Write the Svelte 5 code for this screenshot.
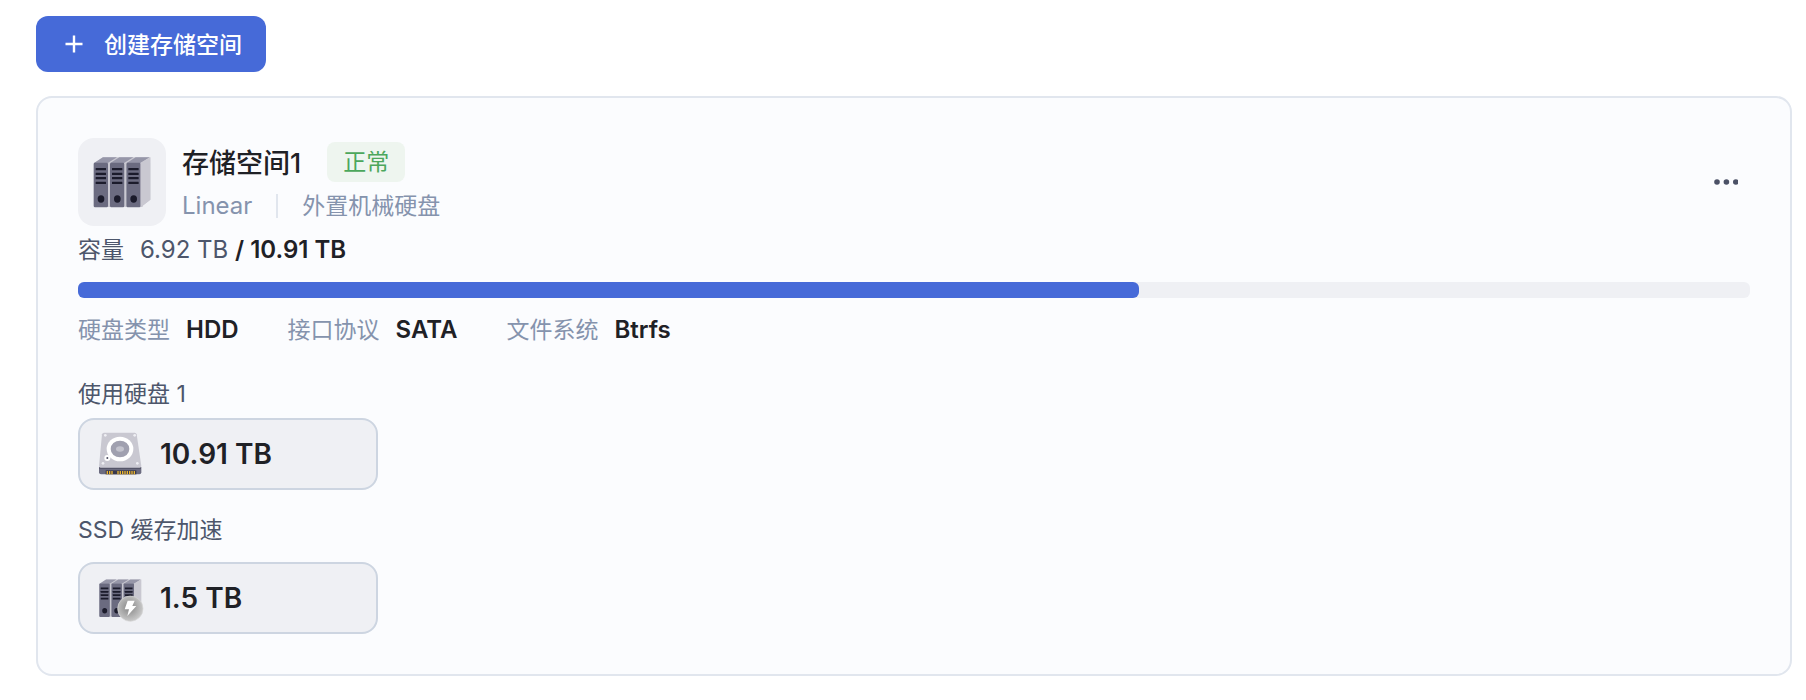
<script>
  const used = 6.92;
  const total = 10.91;
  const percent = (used / total) * 100;

  const specs = [
    { label: '硬盘类型', value: 'HDD' },
    { label: '接口协议', value: 'SATA' },
    { label: '文件系统', value: 'Btrfs' },
  ];

  const bays = [0, 49, 98];
  const slots = [90, 104, 117, 131];
  const pins = [32, 39, 46, 64, 71, 78, 85, 92, 99, 106, 113];
  const screws = [[28, 16], [116, 16], [21, 100], [124, 100]];
</script>

{#snippet racks()}
  <path d="M188 75 217 58V185L188 208Z" fill="#c9c8d1" />
  <path d="M48 76 74 58H217L188 76Z" fill="#c9c8d1" />
  {#each bays as x}
    <g transform="translate({x} 0)">
      <path d="M48 75 75 58H117L89 75Z" fill="#9696a8" />
      <path d="M90 75H96V207H90Z" fill="#c9c8d1" />
      <rect x="47" y="74" width="43" height="134" rx="4" fill="#6b6b80" />
      {#each slots as y}
        <rect x="53" {y} width="31" height="7" rx="1" fill="#1b1b2b" />
      {/each}
      <ellipse cx="69" cy="183" rx="10" ry="11" fill="#1b1b2b" />
    </g>
  {/each}
  <path d="M188 75 217 58V185L188 208Z" fill="#c9c8d1" />
{/snippet}

<main>
  <button class="create" type="button">
    <svg width="28" height="28" viewBox="0 0 28 28" aria-hidden="true">
      <path d="M14 5.5V22.5M5.5 14H22.5" stroke="currentColor" stroke-width="2.4" />
    </svg>
    <span>创建存储空间</span>
  </button>

  <section class="card">
    <header>
      <svg class="avatar" viewBox="0 0 264 264" aria-hidden="true">{@render racks()}</svg>
      <div class="heading">
        <div class="title">
          <h2>存储空间1</h2>
          <span class="badge">正常</span>
        </div>
        <div class="sub">
          <span class="latin">Linear</span>
          <i></i>
          <span>外置机械硬盘</span>
        </div>
      </div>
      <button class="more" type="button" aria-label="更多">
        <svg width="24" height="24" viewBox="0 0 24 24" fill="currentColor" aria-hidden="true">
          <circle cx="3" cy="12" r="2.8" />
          <circle cx="12.4" cy="12" r="2.8" />
          <circle cx="21.8" cy="12" r="2.8" />
        </svg>
      </button>
    </header>

    <div class="capacity">
      <span>容量</span>
      <span class="latin">{used} TB <b>/ {total} TB</b></span>
    </div>
    <div class="bar" role="progressbar" aria-label="容量" aria-valuenow={percent} aria-valuemin="0" aria-valuemax="100">
      <div class="fill" style="width: {percent}%"></div>
    </div>

    <dl>
      {#each specs as spec}
        <div>
          <dt>{spec.label}</dt>
          <dd class="latin">{spec.value}</dd>
        </div>
      {/each}
    </dl>

    <h3>使用硬盘 1</h3>
    <div class="disk">
      <svg viewBox="0 0 144 144" aria-hidden="true">
        <path d="M9 111H136V127Q136 133 130 133H15Q9 133 9 127Z" fill="#6b6b80" />
        <path d="M10 111H135V117H10Z" fill="#555568" />
        <path d="M24 8H116Q121 8 122 13L136 108Q136 113 131 113H14Q9 113 9 108L18 13Q19 8 24 8Z" fill="#c9c8d1" />
        {#each screws as [x, y]}
          <circle cx={x} cy={y} r="4" fill="#efeff4" />
        {/each}
        <ellipse cx="72" cy="57" rx="40" ry="37" fill="#fff" />
        <circle cx="34" cy="84" r="9" fill="#fff" />
        <circle cx="34" cy="84" r="3" fill="#4c4c60" />
        <ellipse cx="72" cy="57" rx="28" ry="25" fill="#a0a0af" />
        <ellipse cx="72" cy="57" rx="12" ry="8" fill="#c3c3cd" />
        <path d="M29 121H121V133H29Z" fill="#38384c" />
        {#each pins as x}
          <rect {x} y="123" width="4" height="10" fill="#eab530" />
        {/each}
      </svg>
      <strong>10.91 TB</strong>
    </div>

    <h3 class="cache">SSD 缓存加速</h3>
    <div class="disk">
      <svg viewBox="0 0 144 144" aria-hidden="true">
        <defs>
          <radialGradient id="coin" cx="45%" cy="45%" r="60%">
            <stop offset="0" stop-color="#858585" />
            <stop offset="1" stop-color="#cfcfcf" />
          </radialGradient>
        </defs>
        <g transform="translate(-25 -27) scale(0.74 0.75)">{@render racks()}</g>
        <circle cx="103" cy="104" r="38" fill="url(#coin)" stroke="#d6d6d6" stroke-width="2" />
        <path d="M95 80H116L109 96H121L94 126L99 106H86Z" fill="#fff" />
      </svg>
      <strong>1.5 TB</strong>
    </div>
  </section>
</main>

<style>
  :global(body) {
    margin: 0;
    background: #fff;
  }
  main {
    padding: 16px 14px 24px 36px;
    font-family: Inter, 'Noto Sans CJK SC', sans-serif;
    font-size: 23px;
    color: #1f2126;
  }
  button {
    border: 0;
    font: inherit;
    cursor: pointer;
  }
  .create {
    display: flex;
    align-items: center;
    gap: 16px;
    height: 56px;
    padding: 0 24px;
    border-radius: 12px;
    background: #466ad8;
    color: #fff;
    font-weight: 500;
  }
  .create span,
  h2 {
    padding-bottom: 2px;
  }
  .card {
    margin-top: 24px;
    padding: 40px;
    border: 2px solid #e1e6ee;
    border-radius: 16px;
    background: #fbfcfe;
  }
  header {
    display: flex;
    align-items: center;
    gap: 16px;
  }
  .avatar {
    width: 88px;
    height: 88px;
    border-radius: 16px;
    background: #eff0f4;
  }
  .heading {
    display: grid;
    gap: 8px;
    flex: 1;
  }
  .title {
    display: flex;
    align-items: center;
    gap: 26px;
    height: 40px;
  }
  h2 {
    margin: 0;
    font-size: 27px;
    font-weight: 500;
  }
  .badge {
    padding: 0 16px;
    border-radius: 8px;
    background: #eef5ef;
    color: #4ca75c;
    line-height: 40px;
  }
  .sub {
    display: flex;
    align-items: center;
    gap: 24px;
    height: 32px;
    line-height: 32px;
    color: #8593ad;
  }
  .sub i {
    width: 2px;
    height: 24px;
    background: #e1e6ee;
  }
  .latin {
    font-size: 24px;
  }
  .more {
    display: grid;
    place-items: center;
    width: 48px;
    height: 48px;
    padding: 0;
    background: none;
    color: #4b5166;
  }
  .capacity {
    display: flex;
    gap: 16px;
    margin-bottom: 8px;
    line-height: 48px;
    color: #4d566b;
  }
  b,
  strong,
  dd {
    color: #1f2126;
    font-weight: 600;
  }
  .bar {
    height: 16px;
    border-radius: 6px;
    background: #eff0f4;
  }
  .fill {
    height: 100%;
    border-radius: 6px;
    background: #466ad8;
  }
  dl {
    display: flex;
    gap: 49px;
    margin: 8px 0 20px;
    line-height: 48px;
  }
  dl div {
    display: flex;
    gap: 16px;
  }
  dt {
    color: #8593ad;
  }
  dd {
    margin: 0;
  }
  h3 {
    margin: 0 0 4px;
    font-size: 23px;
    font-weight: 400;
    line-height: 40px;
    color: #4d566b;
  }
  .cache {
    margin: 20px 0 12px;
  }
  .disk {
    display: flex;
    align-items: center;
    gap: 16px;
    box-sizing: border-box;
    width: 300px;
    height: 72px;
    padding: 0 16px;
    border: 2px solid #cdd5e1;
    border-radius: 16px;
    background: #eff0f4;
  }
  .disk svg {
    width: 48px;
    height: 48px;
  }
  strong {
    font-size: 28px;
  }
</style>
